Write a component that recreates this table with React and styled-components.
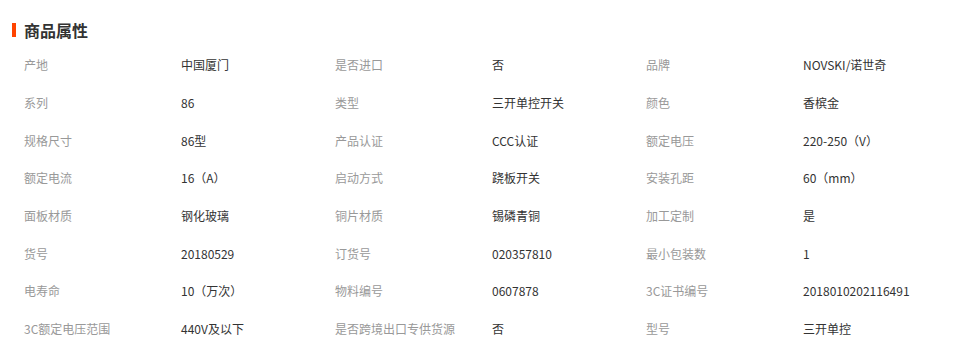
import React from 'react';
import styled, { createGlobalStyle } from 'styled-components';

const GlobalStyle = createGlobalStyle`
  body {
    margin: 0;
    background: #fff;
    font-family: "Noto Sans CJK SC", "Liberation Sans", sans-serif;
  }
`;

const Panel = styled.div`
  width: 970px;
  padding: 20px 0 0 12px;
  box-sizing: border-box;
`;

const Title = styled.h3`
  display: flex;
  align-items: center;
  gap: 8px;
  margin: 0;
  height: 20px;
  font-size: 16px;
  font-weight: bold;
  color: #333;
  line-height: 20px;

  &::before {
    content: '';
    width: 4px;
    height: 14px;
    background: #ff4400;
  }
`;

const AttrGrid = styled.div`
  display: grid;
  grid-template-columns: repeat(3, 157px 154px);
  grid-auto-rows: 37.7px;
  margin: 6px 0 0 12px;
  font-size: 12px;
`;

const Cell = styled.div`
  display: flex;
  align-items: center;
  white-space: nowrap;
  color: ${props => (props.label ? '#999' : '#333')};
`;

const attrs = [
  ['产地', '中国厦门'], ['是否进口', '否'], ['品牌', 'NOVSKI/诺世奇'],
  ['系列', '86'], ['类型', '三开单控开关'], ['颜色', '香槟金'],
  ['规格尺寸', '86型'], ['产品认证', 'CCC认证'], ['额定电压', '220-250（V）'],
  ['额定电流', '16（A）'], ['启动方式', '跷板开关'], ['安装孔距', '60（mm）'],
  ['面板材质', '钢化玻璃'], ['铜片材质', '锡磷青铜'], ['加工定制', '是'],
  ['货号', '20180529'], ['订货号', '020357810'], ['最小包装数', '1'],
  ['电寿命', '10（万次）'], ['物料编号', '0607878'], ['3C证书编号', '2018010202116491'],
  ['3C额定电压范围', '440V及以下'], ['是否跨境出口专供货源', '否'], ['型号', '三开单控'],
];

export default function App() {
  return (
    <Panel>
      <GlobalStyle />
      <Title>商品属性</Title>
      <AttrGrid>
        {attrs.map(([name, value]) => (
          <React.Fragment key={name}>
            <Cell label>{name}</Cell>
            <Cell>{value}</Cell>
          </React.Fragment>
        ))}
      </AttrGrid>
    </Panel>
  );
}
